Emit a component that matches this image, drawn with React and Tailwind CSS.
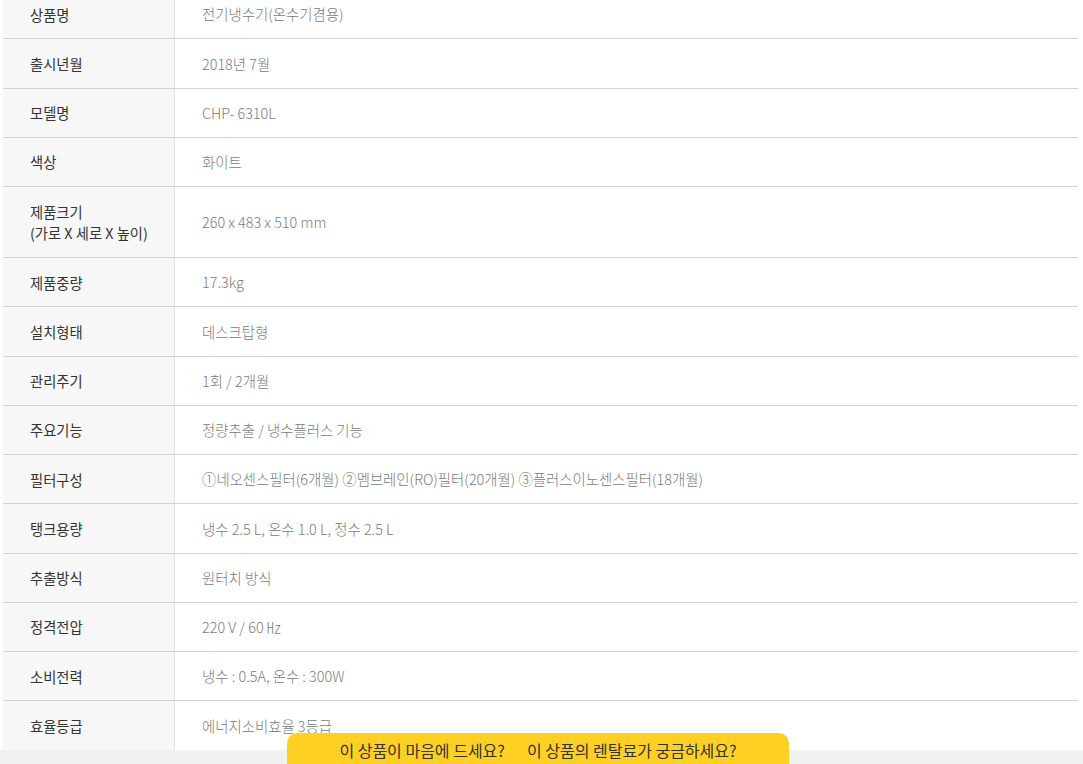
const rows = [
  ['상품명', '전기냉수기(온수기겸용)'],
  ['출시년월', '2018년 7월'],
  ['모델명', 'CHP- 6310L'],
  ['색상', '화이트'],
  [['제품크기', '(가로 X 세로 X 높이)'], '260 x 483 x 510 mm', true],
  ['제품중량', '17.3kg'],
  ['설치형태', '데스크탑형'],
  ['관리주기', '1회 / 2개월'],
  ['주요기능', '정량추출 / 냉수플러스 기능'],
  ['필터구성', '①네오센스필터(6개월) ②멤브레인(RO)필터(20개월) ③플러스이노센스필터(18개월)'],
  ['탱크용량', '냉수 2.5 L, 온수 1.0 L, 정수 2.5 L'],
  ['추출방식', '원터치 방식'],
  ['정격전압', '220 V / 60 ㎐'],
  ['소비전력', '냉수 : 0.5A, 온수 : 300W'],
  ['효율등급', '에너지소비효율 3등급'],
  ['', ''],
];

export default function App() {
  return (
    <div
      className="relative w-[1083px] h-[764px] overflow-hidden bg-white"
      style={{ fontFamily: '"Noto Sans CJK KR", "Noto Sans", sans-serif' }}
    >
      <div className="mt-[-10px] ml-[3px] w-[1075px]">
        {rows.map(([label, value, tall], i) => (
          <div
            key={i}
            className={`flex border-b border-[#d2d2d2] ${tall ? 'h-[71px]' : 'h-[49.25px]'}`}
          >
            <div className="w-[172px] shrink-0 bg-[#f7f7f7] border-r border-[#e2e2e2] flex flex-col justify-center pl-[27px] text-[14.3px] leading-[21px] text-[#333]">
              {Array.isArray(label) ? label.map((l) => <span key={l}>{l}</span>) : label}
            </div>
            <div className="flex-1 flex items-center pl-[27px] text-[14.4px] font-light text-[#7a7a7a]">
              {value}
            </div>
          </div>
        ))}
      </div>
      <div className="absolute left-0 right-0 top-[750px] h-[14px] bg-[#f1f1f1]" />
      <div className="absolute left-[287px] top-[733px] w-[502px] h-[31px] rounded-t-[10px] bg-[#fdd023] flex items-center justify-center gap-[22px] pt-[2px] text-[16px] text-[#333]">
        <span>이 상품이 마음에 드세요?</span>
        <span>이 상품의 렌탈료가 궁금하세요?</span>
      </div>
    </div>
  );
}
